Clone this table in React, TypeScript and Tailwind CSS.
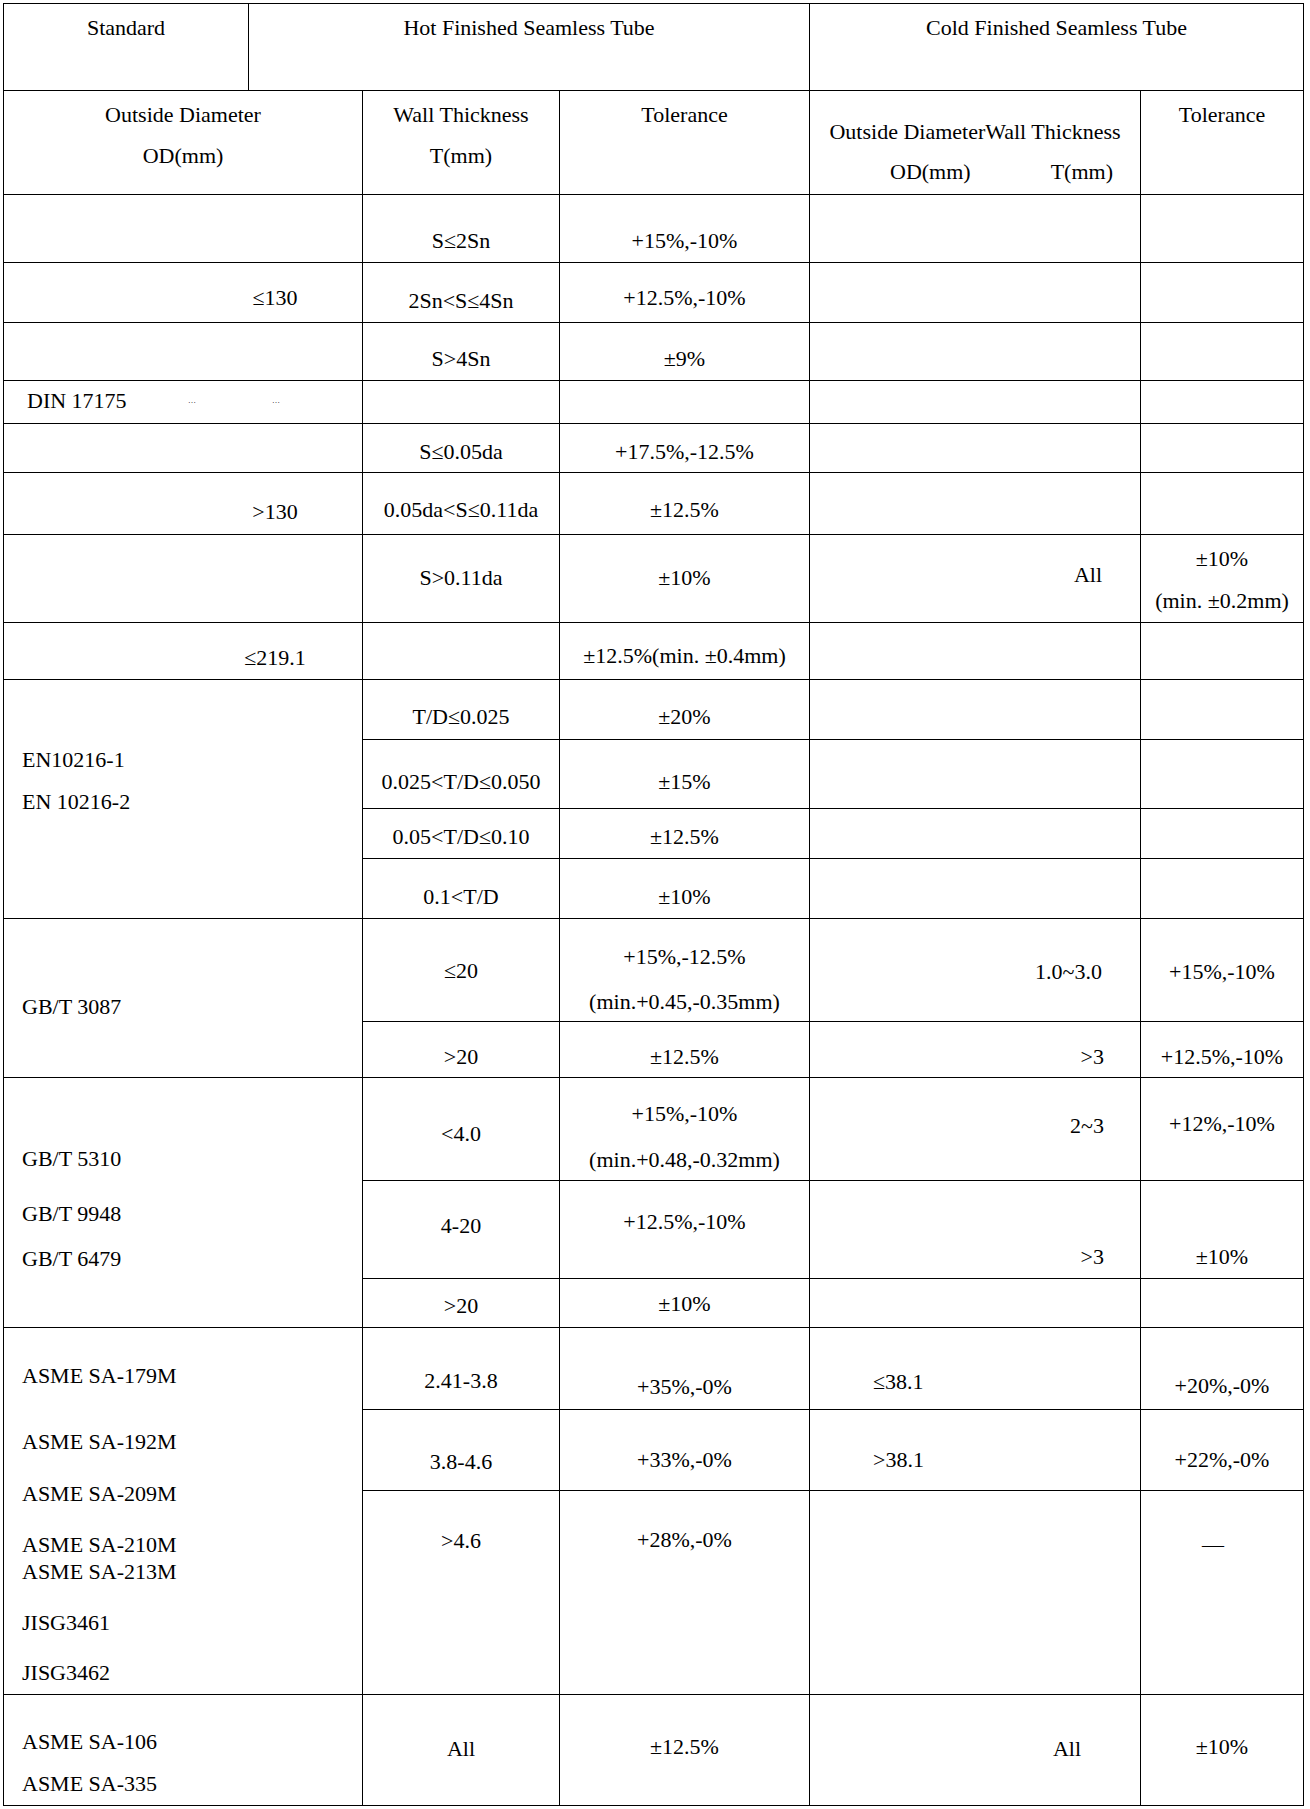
import type { ReactNode } from "react";

// One cell of the tolerance grid. The black grid background shows through the 1px gaps as rules.
function Cell({ className = "", children }: { className?: string; children?: ReactNode }) {
  return <div className={`bg-white ${className}`}>{children}</div>;
}

export default function App() {
  return (
    <div className="min-h-[1809px] bg-white pl-[3px] pt-[3px] text-black font-['Liberation_Serif','Noto_Sans_CJK_SC',serif] text-[22px] leading-[24px]">
      <div className="grid w-fit gap-px bg-black p-px grid-cols-[244px_113px_196px_249px_330px_162px] grid-rows-[86px_103px_67px_59px_57px_42px_48px_61px_87px_56px_59px_68px_49px_59px_102px_55px_102px_97px_48px_81px_80px_203px_110px]">
        {/* Header */}
        <Cell className="pt-[12px] text-center">Standard</Cell>
        <Cell className="col-span-3 pt-[12px] text-center">Hot Finished Seamless Tube</Cell>
        <Cell className="col-span-2 pt-[12px] text-center">Cold Finished Seamless Tube</Cell>

        <Cell className="col-span-2 pt-[12px] text-center">
          <div>Outside Diameter</div>
          <div className="mt-[17px]">OD(mm)</div>
        </Cell>
        <Cell className="pt-[12px] text-center">
          <div>Wall Thickness</div>
          <div className="mt-[17px]">T(mm)</div>
        </Cell>
        <Cell className="pt-[12px] text-center">Tolerance</Cell>
        <Cell className="pt-[29px]">
          <div className="text-center">Outside DiameterWall Thickness</div>
          <div className="mt-[16px] flex">
            <span className="ml-[80px]">OD(mm)</span>
            <span className="ml-auto mr-[27px]">T(mm)</span>
          </div>
        </Cell>
        <Cell className="pt-[12px] text-center">Tolerance</Cell>

        {/* DIN 17175 */}
        <Cell className="col-span-2" />
        <Cell className="pt-[34px] text-center">S≤2Sn</Cell>
        <Cell className="pt-[34px] text-center">+15%,-10%</Cell>
        <Cell />
        <Cell />

        <Cell className="col-span-2 pt-[23px]">
          <div className="ml-[221px] w-[100px] text-center">≤130</div>
        </Cell>
        <Cell className="pt-[26px] text-center">2Sn&lt;S≤4Sn</Cell>
        <Cell className="pt-[23px] text-center">+12.5%,-10%</Cell>
        <Cell />
        <Cell />

        <Cell className="col-span-2" />
        <Cell className="pt-[24px] text-center">S&gt;4Sn</Cell>
        <Cell className="pt-[24px] text-center">±9%</Cell>
        <Cell />
        <Cell />

        <Cell className="col-span-2 flex items-center pb-[2px] pl-[23px]">
          <span className="w-[106px]">DIN 17175</span>
          <span className="ml-[55px] text-[8px] leading-none">…</span>
          <span className="ml-[76px] text-[8px] leading-none">…</span>
        </Cell>
        <Cell />
        <Cell />
        <Cell />
        <Cell />

        <Cell className="col-span-2" />
        <Cell className="pt-[16px] text-center">S≤0.05da</Cell>
        <Cell className="pt-[16px] text-center">+17.5%,-12.5%</Cell>
        <Cell />
        <Cell />

        <Cell className="col-span-2 pt-[27px]">
          <div className="ml-[221px] w-[100px] text-center">&gt;130</div>
        </Cell>
        <Cell className="pt-[25px] text-center">0.05da&lt;S≤0.11da</Cell>
        <Cell className="pt-[25px] text-center">±12.5%</Cell>
        <Cell />
        <Cell />

        <Cell className="col-span-2" />
        <Cell className="pt-[31px] text-center">S&gt;0.11da</Cell>
        <Cell className="pt-[31px] text-center">±10%</Cell>
        <Cell className="pr-[38px] pt-[28px] text-right">All</Cell>
        <Cell className="pt-[12px] text-center">
          <div>±10%</div>
          <div className="mt-[18px]">(min. ±0.2mm)</div>
        </Cell>

        <Cell className="col-span-2 pt-[23px]">
          <div className="ml-[221px] w-[100px] text-center">≤219.1</div>
        </Cell>
        <Cell />
        <Cell className="pt-[21px] text-center">±12.5%(min. ±0.4mm)</Cell>
        <Cell />
        <Cell />

        {/* EN 10216 */}
        <Cell className="col-span-2 row-span-4 pl-[18px] pt-[68px]">
          <div>EN10216-1</div>
          <div className="mt-[18px]">EN 10216-2</div>
        </Cell>
        <Cell className="pt-[25px] text-center">T/D≤0.025</Cell>
        <Cell className="pt-[25px] text-center">±20%</Cell>
        <Cell />
        <Cell />

        <Cell className="pt-[30px] text-center">0.025&lt;T/D≤0.050</Cell>
        <Cell className="pt-[30px] text-center">±15%</Cell>
        <Cell />
        <Cell />

        <Cell className="pt-[16px] text-center">0.05&lt;T/D≤0.10</Cell>
        <Cell className="pt-[16px] text-center">±12.5%</Cell>
        <Cell />
        <Cell />

        <Cell className="pt-[26px] text-center">0.1&lt;T/D</Cell>
        <Cell className="pt-[26px] text-center">±10%</Cell>
        <Cell />
        <Cell />

        {/* GB/T 3087 */}
        <Cell className="col-span-2 row-span-2 pl-[18px] pt-[76px]">GB/T 3087</Cell>
        <Cell className="pt-[40px] text-center">≤20</Cell>
        <Cell className="pt-[26px] text-center">
          <div>+15%,-12.5%</div>
          <div className="mt-[21px]">(min.+0.45,-0.35mm)</div>
        </Cell>
        <Cell className="pr-[38px] pt-[41px] text-right">1.0~3.0</Cell>
        <Cell className="pt-[41px] text-center">+15%,-10%</Cell>

        <Cell className="pt-[23px] text-center">&gt;20</Cell>
        <Cell className="pt-[23px] text-center">±12.5%</Cell>
        <Cell className="pr-[36px] pt-[23px] text-right">&gt;3</Cell>
        <Cell className="pt-[23px] text-center">+12.5%,-10%</Cell>

        {/* GB/T 5310 / 9948 / 6479 */}
        <Cell className="col-span-2 row-span-3 pl-[18px] pt-[69px]">
          <div>GB/T 5310</div>
          <div className="mt-[31px]">GB/T 9948</div>
          <div className="mt-[21px]">GB/T 6479</div>
        </Cell>
        <Cell className="pt-[44px] text-center">&lt;4.0</Cell>
        <Cell className="pt-[24px] text-center">
          <div>+15%,-10%</div>
          <div className="mt-[22px]">(min.+0.48,-0.32mm)</div>
        </Cell>
        <Cell className="pr-[36px] pt-[36px] text-right">2~3</Cell>
        <Cell className="pt-[34px] text-center">+12%,-10%</Cell>

        <Cell className="pt-[33px] text-center">4-20</Cell>
        <Cell className="pt-[29px] text-center">+12.5%,-10%</Cell>
        <Cell className="pr-[36px] pt-[64px] text-right">&gt;3</Cell>
        <Cell className="pt-[64px] text-center">±10%</Cell>

        <Cell className="pt-[15px] text-center">&gt;20</Cell>
        <Cell className="pt-[13px] text-center">±10%</Cell>
        <Cell />
        <Cell />

        {/* ASME / JIS */}
        <Cell className="col-span-2 row-span-3 pl-[18px] pt-[36px]">
          <div>ASME SA-179M</div>
          <div className="mt-[42px]">ASME SA-192M</div>
          <div className="mt-[28px]">ASME SA-209M</div>
          <div className="mt-[27px]">ASME SA-210M</div>
          <div className="mt-[3px]">ASME SA-213M</div>
          <div className="mt-[27px]">JISG3461</div>
          <div className="mt-[26px]">JISG3462</div>
        </Cell>
        <Cell className="pt-[41px] text-center">2.41-3.8</Cell>
        <Cell className="pt-[47px] text-center">+35%,-0%</Cell>
        <Cell className="pl-[63px] pt-[42px]">≤38.1</Cell>
        <Cell className="pt-[46px] text-center">+20%,-0%</Cell>

        <Cell className="pt-[40px] text-center">3.8-4.6</Cell>
        <Cell className="pt-[38px] text-center">+33%,-0%</Cell>
        <Cell className="pl-[63px] pt-[38px]">&gt;38.1</Cell>
        <Cell className="pt-[38px] text-center">+22%,-0%</Cell>

        <Cell className="pt-[38px] text-center">&gt;4.6</Cell>
        <Cell className="pt-[37px] text-center">+28%,-0%</Cell>
        <Cell />
        <Cell className="pr-[18px] pt-[42px] text-center">—</Cell>

        {/* ASME SA-106 / SA-335 */}
        <Cell className="col-span-2 pl-[18px] pt-[35px]">
          <div>ASME SA-106</div>
          <div className="mt-[18px]">ASME SA-335</div>
        </Cell>
        <Cell className="pt-[42px] text-center">All</Cell>
        <Cell className="pt-[40px] text-center">±12.5%</Cell>
        <Cell className="pr-[59px] pt-[42px] text-right">All</Cell>
        <Cell className="pt-[40px] text-center">±10%</Cell>
      </div>
    </div>
  );
}
